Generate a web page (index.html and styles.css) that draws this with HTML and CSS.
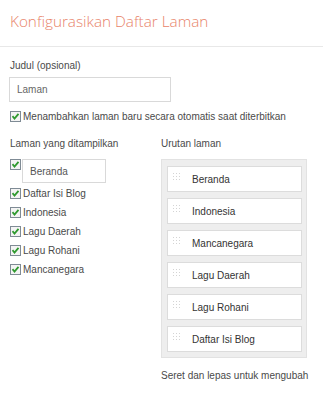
FILE: index.html
```html
<!DOCTYPE html>
<html lang="id">
<head>
    <meta charset="UTF-8">
    <meta name="viewport" content="width=device-width, initial-scale=1.0">
    <title>Konfigurasikan Daftar Laman</title>
    <link rel="stylesheet" href="styles.css">
</head>
<body>
    <div class="dialog">
        <div class="dialog-header">
            <h1>Konfigurasikan Daftar Laman</h1>
        </div>
        <div class="dialog-body">
            <label class="field-label" for="title-input">Judul (opsional)</label>
            <input type="text" id="title-input" class="text-input" value="Laman">

            <div class="check-row auto-add">
                <span class="check"><svg width="11" height="11" viewBox="0 0 11 11"><rect x="0.5" y="0.5" width="10" height="10" fill="#f4f4f4" stroke="#7f8b95"/><path d="M2.5 5.2 L4.5 7.5 L8.5 2.8" fill="none" stroke="#2f9a2f" stroke-width="1.8"/></svg></span>
                <span>Menambahkan laman baru secara otomatis saat diterbitkan</span>
            </div>

            <div class="columns">
                <div class="col-left">
                    <div class="col-title">Laman yang ditampilkan</div>
                    <div class="page-row first">
                        <span class="check"><svg width="11" height="11" viewBox="0 0 11 11"><rect x="0.5" y="0.5" width="10" height="10" fill="#f4f4f4" stroke="#7f8b95"/><path d="M2.5 5.2 L4.5 7.5 L8.5 2.8" fill="none" stroke="#2f9a2f" stroke-width="1.8"/></svg></span>
                        <input type="text" class="page-input" value="Beranda">
                    </div>
                    <div class="page-row">
                        <span class="check"><svg width="11" height="11" viewBox="0 0 11 11"><rect x="0.5" y="0.5" width="10" height="10" fill="#f4f4f4" stroke="#7f8b95"/><path d="M2.5 5.2 L4.5 7.5 L8.5 2.8" fill="none" stroke="#2f9a2f" stroke-width="1.8"/></svg></span>
                        <span>Daftar Isi Blog</span>
                    </div>
                    <div class="page-row">
                        <span class="check"><svg width="11" height="11" viewBox="0 0 11 11"><rect x="0.5" y="0.5" width="10" height="10" fill="#f4f4f4" stroke="#7f8b95"/><path d="M2.5 5.2 L4.5 7.5 L8.5 2.8" fill="none" stroke="#2f9a2f" stroke-width="1.8"/></svg></span>
                        <span>Indonesia</span>
                    </div>
                    <div class="page-row">
                        <span class="check"><svg width="11" height="11" viewBox="0 0 11 11"><rect x="0.5" y="0.5" width="10" height="10" fill="#f4f4f4" stroke="#7f8b95"/><path d="M2.5 5.2 L4.5 7.5 L8.5 2.8" fill="none" stroke="#2f9a2f" stroke-width="1.8"/></svg></span>
                        <span>Lagu Daerah</span>
                    </div>
                    <div class="page-row">
                        <span class="check"><svg width="11" height="11" viewBox="0 0 11 11"><rect x="0.5" y="0.5" width="10" height="10" fill="#f4f4f4" stroke="#7f8b95"/><path d="M2.5 5.2 L4.5 7.5 L8.5 2.8" fill="none" stroke="#2f9a2f" stroke-width="1.8"/></svg></span>
                        <span>Lagu Rohani</span>
                    </div>
                    <div class="page-row">
                        <span class="check"><svg width="11" height="11" viewBox="0 0 11 11"><rect x="0.5" y="0.5" width="10" height="10" fill="#f4f4f4" stroke="#7f8b95"/><path d="M2.5 5.2 L4.5 7.5 L8.5 2.8" fill="none" stroke="#2f9a2f" stroke-width="1.8"/></svg></span>
                        <span>Mancanegara</span>
                    </div>
                </div>

                <div class="col-right">
                    <div class="col-title">Urutan laman</div>
                    <div class="order-box">
                        <div class="order-item"><svg class="grip" width="8" height="9" viewBox="0 0 8 9" fill="#d4d4d4"><rect x="0" y="0" width="1" height="1"/><rect x="3" y="0" width="1" height="1"/><rect x="6" y="0" width="1" height="1"/><rect x="0" y="3" width="1" height="1"/><rect x="3" y="3" width="1" height="1"/><rect x="6" y="3" width="1" height="1"/><rect x="0" y="6" width="1" height="1"/><rect x="3" y="6" width="1" height="1"/><rect x="6" y="6" width="1" height="1"/></svg>Beranda</div>
                        <div class="order-item"><svg class="grip" width="8" height="9" viewBox="0 0 8 9" fill="#d4d4d4"><rect x="0" y="0" width="1" height="1"/><rect x="3" y="0" width="1" height="1"/><rect x="6" y="0" width="1" height="1"/><rect x="0" y="3" width="1" height="1"/><rect x="3" y="3" width="1" height="1"/><rect x="6" y="3" width="1" height="1"/><rect x="0" y="6" width="1" height="1"/><rect x="3" y="6" width="1" height="1"/><rect x="6" y="6" width="1" height="1"/></svg>Indonesia</div>
                        <div class="order-item"><svg class="grip" width="8" height="9" viewBox="0 0 8 9" fill="#d4d4d4"><rect x="0" y="0" width="1" height="1"/><rect x="3" y="0" width="1" height="1"/><rect x="6" y="0" width="1" height="1"/><rect x="0" y="3" width="1" height="1"/><rect x="3" y="3" width="1" height="1"/><rect x="6" y="3" width="1" height="1"/><rect x="0" y="6" width="1" height="1"/><rect x="3" y="6" width="1" height="1"/><rect x="6" y="6" width="1" height="1"/></svg>Mancanegara</div>
                        <div class="order-item"><svg class="grip" width="8" height="9" viewBox="0 0 8 9" fill="#d4d4d4"><rect x="0" y="0" width="1" height="1"/><rect x="3" y="0" width="1" height="1"/><rect x="6" y="0" width="1" height="1"/><rect x="0" y="3" width="1" height="1"/><rect x="3" y="3" width="1" height="1"/><rect x="6" y="3" width="1" height="1"/><rect x="0" y="6" width="1" height="1"/><rect x="3" y="6" width="1" height="1"/><rect x="6" y="6" width="1" height="1"/></svg>Lagu Daerah</div>
                        <div class="order-item"><svg class="grip" width="8" height="9" viewBox="0 0 8 9" fill="#d4d4d4"><rect x="0" y="0" width="1" height="1"/><rect x="3" y="0" width="1" height="1"/><rect x="6" y="0" width="1" height="1"/><rect x="0" y="3" width="1" height="1"/><rect x="3" y="3" width="1" height="1"/><rect x="6" y="3" width="1" height="1"/><rect x="0" y="6" width="1" height="1"/><rect x="3" y="6" width="1" height="1"/><rect x="6" y="6" width="1" height="1"/></svg>Lagu Rohani</div>
                        <div class="order-item"><svg class="grip" width="8" height="9" viewBox="0 0 8 9" fill="#d4d4d4"><rect x="0" y="0" width="1" height="1"/><rect x="3" y="0" width="1" height="1"/><rect x="6" y="0" width="1" height="1"/><rect x="0" y="3" width="1" height="1"/><rect x="3" y="3" width="1" height="1"/><rect x="6" y="3" width="1" height="1"/><rect x="0" y="6" width="1" height="1"/><rect x="3" y="6" width="1" height="1"/><rect x="6" y="6" width="1" height="1"/></svg>Daftar Isi Blog</div>
                    </div>
                    <div class="order-hint">Seret dan lepas untuk mengubah</div>
                </div>
            </div>
        </div>
    </div>
</body>
</html>
```

FILE: styles.css
```css
* {
    margin: 0;
    padding: 0;
    box-sizing: border-box;
}
body {
    font-family: 'Liberation Sans', Arial, sans-serif;
    font-size: 10px;
    color: #4a4a4a;
    background-color: #fff;
}
.dialog {
    width: 323px;
    height: 400px;
}
.dialog-header {
    height: 47px;
    padding: 10px 0 0 10px;
    border-bottom: 1px solid #e8e8e8;
}
.dialog-header h1 {
    font-family: 'Open Sans', sans-serif;
    font-weight: 300;
    font-size: 15.3px;
    line-height: 22px;
    color: #e8846a;
}
.dialog-body {
    padding: 12px 0 0 10px;
}
.field-label {
    display: block;
    line-height: 14px;
}
.text-input {
    display: block;
    width: 162px;
    height: 25px;
    margin: 4px 0 0 -1px;
    padding: 0 7px;
    border: 1px solid #d9d9d9;
    font-family: inherit;
    font-size: 10px;
    color: #666;
    outline: none;
}
.check-row {
    display: flex;
    align-items: center;
    height: 14px;
    margin-top: 7px;
}
.check {
    display: flex;
    width: 11px;
    height: 11px;
    margin-right: 2px;
}
.columns {
    display: flex;
    margin-top: 14px;
}
.col-left {
    width: 151px;
}
.col-right {
    width: 146px;
}
.col-title {
    line-height: 14px;
    margin-bottom: 8px;
}
.page-row {
    display: flex;
    align-items: center;
    height: 19px;
}
.page-row.first {
    align-items: flex-start;
    height: 25px;
}
.page-input {
    width: 84px;
    height: 24px;
    margin-left: -1px;
    padding: 0 7px;
    border: 1px solid #d9d9d9;
    font-family: inherit;
    font-size: 10px;
    color: #555;
    outline: none;
}
.order-box {
    background-color: #eeeeee;
    border: 1px solid #e2e2e2;
    padding: 6px 4px 5px 5px;
    display: flex;
    flex-direction: column;
    gap: 6px;
}
.order-item {
    display: flex;
    align-items: center;
    height: 26px;
    background-color: #fff;
    border: 1px solid #dcdcdc;
    padding-left: 5px;
    color: #333;
}
.grip {
    flex: none;
    margin-right: 11px;
    margin-top: -3px;
}
.order-hint {
    margin-top: 11px;
    line-height: 14px;
    white-space: nowrap;
}
```
